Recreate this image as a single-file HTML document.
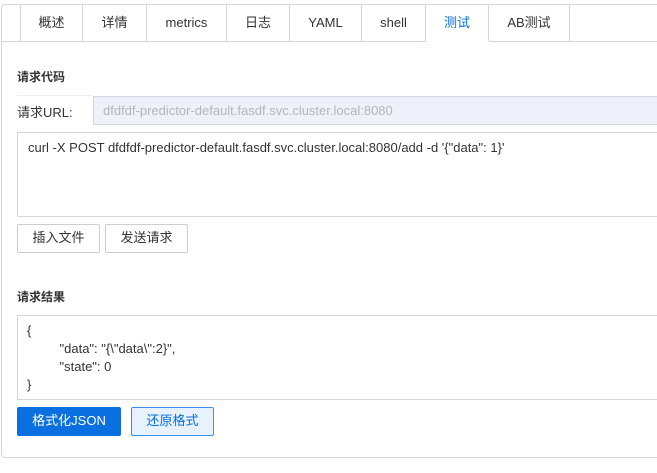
<!DOCTYPE html>
<html><head><meta charset="utf-8"><style>
*{box-sizing:border-box;margin:0;padding:0}
body{width:657px;height:473px;background:#fff;font-family:"Liberation Sans","Noto Sans CJK SC",sans-serif;font-size:12px;color:#333;position:relative;overflow:hidden}
.abs{position:absolute}
.panel{left:1px;top:4px;width:670px;height:454px;border:1px solid #d4d6de;border-radius:4px}
.tabline{left:2px;top:41px;width:660px;height:1px;background:#d4d6de}
.tab{top:5px;height:37px;border-right:1px solid #d4d6de;border-bottom:1px solid #d4d6de;text-align:center;line-height:36px;font-size:13px;color:#333;background:#fff}
.tab.first{border-left:1px solid #d4d6de}
.tab.act{color:#0a6fe0;border-bottom-color:#fff}
.h{font-weight:bold;font-size:12px;color:#333}
.box{border:1px solid #d4d6de;background:#fff}
.btn{border:1px solid #ccced6;border-radius:2px;text-align:center;line-height:26px;font-size:13px;color:#333;background:#fff}
</style></head><body>
<div class="abs panel"></div>
<div class="abs tabline"></div>
<div class="abs tab first" style="left:20px;width:63px">概述</div>
<div class="abs tab" style="left:83px;width:64px">详情</div>
<div class="abs tab" style="left:147px;width:80px">metrics</div>
<div class="abs tab" style="left:227px;width:63px">日志</div>
<div class="abs tab" style="left:290px;width:72px">YAML</div>
<div class="abs tab" style="left:362px;width:64px">shell</div>
<div class="abs tab act" style="left:426px;width:63px">测试</div>
<div class="abs tab" style="left:489px;width:81px">AB测试</div>

<div class="abs h" style="left:17px;top:68px">请求代码</div>
<div class="abs" style="left:17px;top:95px;width:76px;height:1px;background:#eceef2"></div>
<div class="abs" style="left:17px;top:102px;font-size:13px">请求URL:</div>
<div class="abs" style="left:93px;top:96px;width:570px;height:29px;background:#eef1f9;border:1px solid #d4d6de;color:#b3b6bf;font-size:13px;line-height:27px;padding-left:9px">dfdfdf-predictor-default.fasdf.svc.cluster.local:8080</div>
<div class="abs box" style="left:17px;top:132px;width:650px;height:85px;padding:7px 10px;font-size:13px">curl -X POST dfdfdf-predictor-default.fasdf.svc.cluster.local:8080/add -d '{"data": 1}'</div>
<div class="abs btn" style="left:17px;top:224px;width:83px;height:29px">插入文件</div>
<div class="abs btn" style="left:105px;top:224px;width:83px;height:29px">发送请求</div>

<div class="abs h" style="left:17px;top:288px">请求结果</div>
<div class="abs box" style="left:17px;top:315px;width:650px;height:85px;padding:6px 9px;font-size:13px;line-height:18px;white-space:pre">{
         "data": "{\"data\":2}",
         "state": 0
}</div>
<div class="abs btn" style="left:17px;top:407px;width:104px;height:29px;background:#0a6fe0;border-color:#0a6fe0;color:#fff">格式化JSON</div>
<div class="abs btn" style="left:131px;top:407px;width:83px;height:29px;background:#e6f2fd;border-color:#3a8ee6;color:#0a6fe0">还原格式</div>
</body></html>
